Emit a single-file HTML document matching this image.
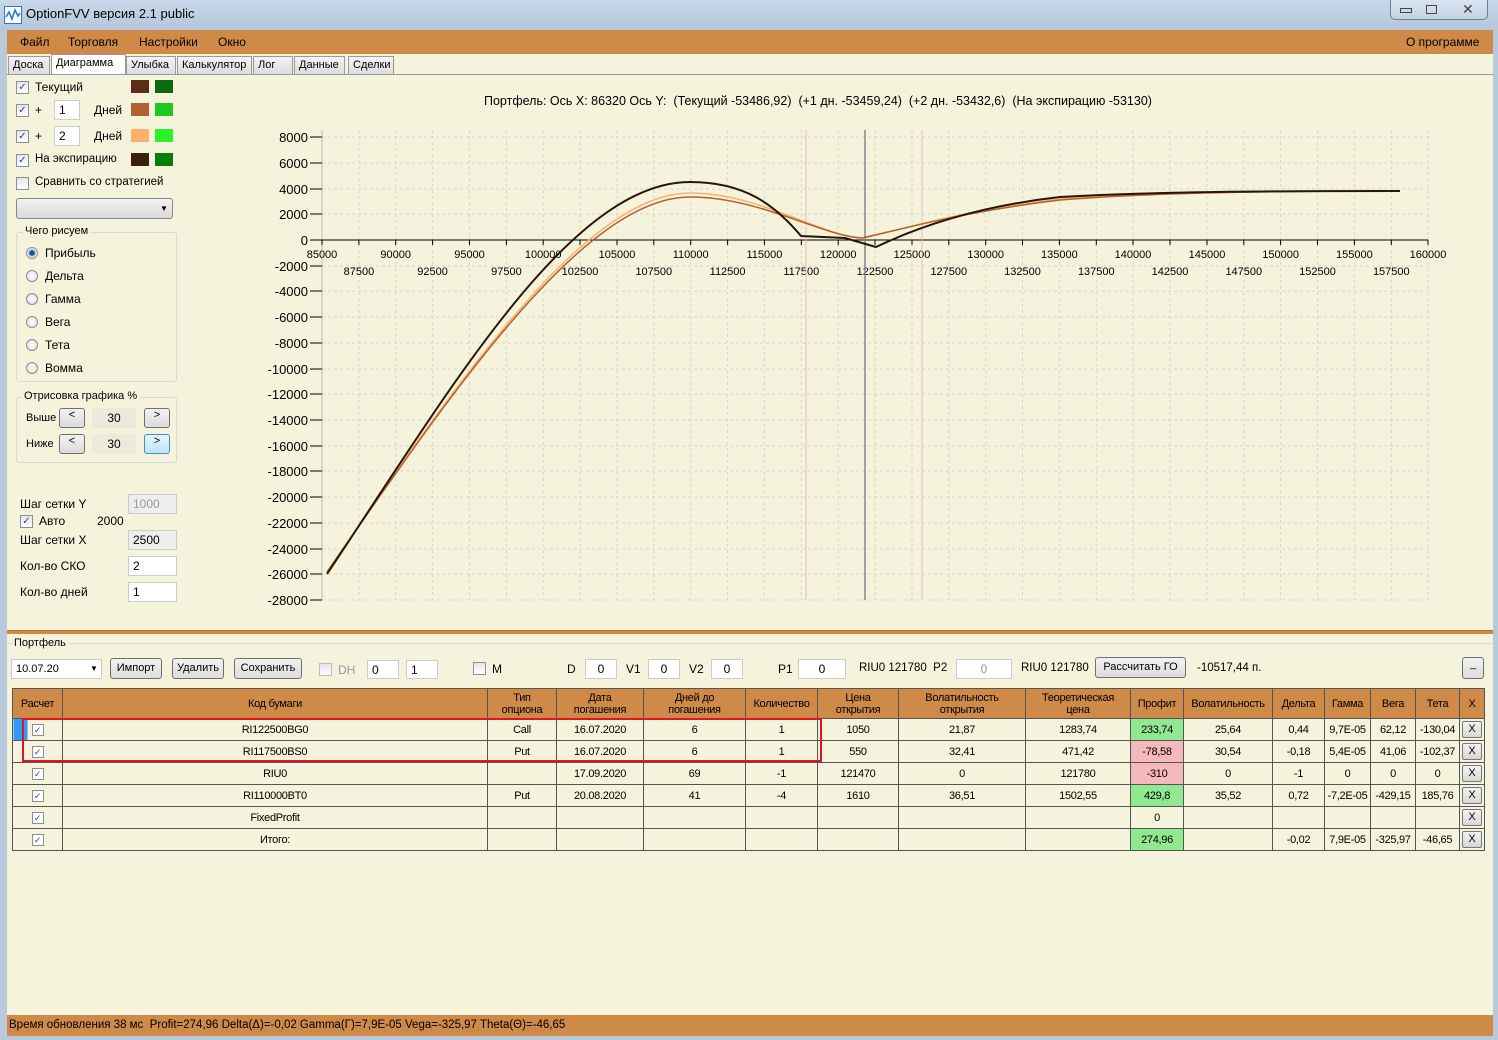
<!DOCTYPE html>
<html><head><meta charset="utf-8"><style>
*{margin:0;padding:0;box-sizing:border-box}
body{width:1498px;height:1040px;overflow:hidden;background:#b9c9dc;font-family:"Liberation Sans",sans-serif;font-size:12px;color:#000;position:relative}
.a{position:absolute}
.cb{position:absolute;width:13px;height:13px;border:1px solid #8a8f99;background:linear-gradient(#e4e6ea,#fff);font-size:10px;line-height:11px;text-align:center;color:#2a3f8a}
.tab{position:absolute;top:56px;height:18px;border:1px solid #999;border-bottom:none;background:linear-gradient(#f4f4f4,#dcdcdc);font-size:11px;line-height:17px;padding:0 4px}
.in{position:absolute;background:#fff;border:1px solid #ccc;height:20px;line-height:18px;padding-left:4px;font-size:12px}
.btn{position:absolute;border:1px solid #707070;border-radius:3px;background:linear-gradient(#f2f2f2,#dcdcdc);text-align:center;font-size:11px}
.sw{position:absolute;width:18px;height:13px}
.rad{position:absolute;width:12px;height:12px;border-radius:50%;border:1px solid #8d8d8d;background:radial-gradient(#fff,#dcdcdc)}
table{border-collapse:collapse;table-layout:fixed;width:1472px;position:absolute;left:12px;top:688px;font-size:11px;letter-spacing:-0.3px;white-space:nowrap}
td,th{border:1px solid #555;height:22px;text-align:center;font-weight:normal;padding:0;overflow:hidden}
th{background:#d08a48;height:30px;line-height:12px}
td{background:#f5f3dc}
.g{background:#90e890}.p{background:#f4b8bd}
.x{display:inline-block;width:20px;height:17px;border:1px solid #777;border-radius:2px;background:linear-gradient(#f2f2f2,#d8d8d8);line-height:15px;letter-spacing:0}
.c{display:inline-block;width:12px;height:12px;border:1px solid #8a8f99;background:#fff;font-size:9px;line-height:10px;color:#2a3f8a;vertical-align:middle}
</style></head><body>
<div class="a" style="left:0;top:0;width:1498px;height:30px;background:linear-gradient(#c9d8ea,#b5c7dd)"></div>
<svg class="a" style="left:4px;top:6px" width="18" height="18"><rect x=".5" y=".5" width="17" height="17" fill="#fff" stroke="#3a74c4"/><path d="M2 11 L5 6 L8 13 L11 4 L14 10 L16 7" stroke="#2a7ad0" stroke-width="1.6" fill="none"/></svg>
<div class="a" style="left:26px;top:6px;font-size:13px">OptionFVV версия 2.1 public</div>
<div class="a" style="left:1390px;top:0;width:98px;height:20px;border:1px solid #6f7f95;border-top:none;border-radius:0 0 5px 5px;background:linear-gradient(#dbe5f1,#c2d1e4)"></div>
<div class="a" style="left:1400px;top:8px;width:12px;height:5px;border:1px solid #444"></div>
<div class="a" style="left:1426px;top:5px;width:11px;height:9px;border:1px solid #444"></div>
<div class="a" style="left:1462px;top:1px;font-size:14px;color:#444">✕</div>
<div class="a" style="left:7px;top:30px;width:1486px;height:1006px;background:#f5f3dc"></div>
<div class="a" style="left:7px;top:30px;width:1486px;height:24px;background:#d08a48"></div>
<div class="a" style="left:20px;top:35px">Файл</div>
<div class="a" style="left:68px;top:35px">Торговля</div>
<div class="a" style="left:139px;top:35px">Настройки</div>
<div class="a" style="left:218px;top:35px">Окно</div>
<div class="a" style="left:1406px;top:35px">О программе</div>
<div class="tab" style="left:8px;width:42px">Доска</div>
<div class="tab" style="left:51px;top:54px;height:21px;background:#fff;width:75px">Диаграмма</div>
<div class="tab" style="left:126px;width:50px">Улыбка</div>
<div class="tab" style="left:177px;width:75px">Калькулятор</div>
<div class="tab" style="left:253px;width:40px">Лог</div>
<div class="tab" style="left:294px;width:51px">Данные</div>
<div class="tab" style="left:348px;width:46px">Сделки</div>
<div class="a" style="left:7px;top:74px;width:1486px;height:1px;background:#999"></div>
<div class="cb" style="left:16px;top:81px">✓</div><div class="a" style="left:35px;top:80px">Текущий</div>
<div class="sw" style="left:131px;top:80px;background:#5e2f18"></div><div class="sw" style="left:155px;top:80px;background:#0b6b0b"></div>
<div class="cb" style="left:16px;top:104px">✓</div><div class="a" style="left:35px;top:103px">+</div>
<div class="in" style="left:54px;top:100px;width:26px">1</div><div class="a" style="left:94px;top:103px">Дней</div>
<div class="sw" style="left:131px;top:103px;background:#b2622c"></div><div class="sw" style="left:155px;top:103px;background:#1fc91f"></div>
<div class="cb" style="left:16px;top:130px">✓</div><div class="a" style="left:35px;top:129px">+</div>
<div class="in" style="left:54px;top:126px;width:26px">2</div><div class="a" style="left:94px;top:129px">Дней</div>
<div class="sw" style="left:131px;top:129px;background:#fbb06c"></div><div class="sw" style="left:155px;top:129px;background:#2cf02c"></div>
<div class="cb" style="left:16px;top:154px">✓</div><div class="a" style="left:35px;top:153px;font-size:11.5px">На экспирацию</div>
<div class="sw" style="left:131px;top:153px;background:#3a1f0c"></div><div class="sw" style="left:155px;top:153px;background:#0a7c0a"></div>
<div class="cb" style="left:16px;top:177px"></div><div class="a" style="left:35px;top:176px;font-size:11.5px">Сравнить со стратегией</div>
<div class="a" style="left:16px;top:198px;width:157px;height:21px;border:1px solid #888;border-radius:3px;background:linear-gradient(#f2f2f2,#d9d9d9)"></div>
<div class="a" style="left:160px;top:204px;font-size:8px">▼</div>
<div class="a" style="left:16px;top:232px;width:161px;height:150px;border:1px solid #d8d8d8;border-radius:3px"></div>
<div class="a" style="left:23px;top:225px;background:#f5f3dc;padding:0 2px;font-size:11px">Чего рисуем</div>
<div class="rad" style="left:26px;top:247px;background:radial-gradient(#1e4f85 30%,#9cc0e4 45%,#fff 70%)"></div><div class="a" style="left:45px;top:246px">Прибыль</div>
<div class="rad" style="left:26px;top:270px"></div><div class="a" style="left:45px;top:269px">Дельта</div>
<div class="rad" style="left:26px;top:293px"></div><div class="a" style="left:45px;top:292px">Гамма</div>
<div class="rad" style="left:26px;top:316px"></div><div class="a" style="left:45px;top:315px">Вега</div>
<div class="rad" style="left:26px;top:339px"></div><div class="a" style="left:45px;top:338px">Тета</div>
<div class="rad" style="left:26px;top:362px"></div><div class="a" style="left:45px;top:361px">Вомма</div>
<div class="a" style="left:16px;top:397px;width:161px;height:66px;border:1px solid #d8d8d8;border-radius:3px"></div>
<div class="a" style="left:22px;top:390px;background:#f5f3dc;padding:0 2px;font-size:11px">Отрисовка графика %</div>
<div class="a" style="left:26px;top:412px;font-size:11px">Выше</div>
<div class="btn" style="left:59px;top:408px;width:26px;height:20px">&lt;</div>
<div class="a" style="left:92px;top:408px;width:44px;height:20px;background:#eceadc;text-align:center;line-height:20px">30</div>
<div class="btn" style="left:144px;top:408px;width:26px;height:20px">&gt;</div>
<div class="a" style="left:26px;top:438px;font-size:11px">Ниже</div>
<div class="btn" style="left:59px;top:434px;width:26px;height:20px">&lt;</div>
<div class="a" style="left:92px;top:434px;width:44px;height:20px;background:#eceadc;text-align:center;line-height:20px">30</div>
<div class="btn" style="left:144px;top:434px;width:26px;height:20px;border-color:#3c8fd0;background:linear-gradient(#e8f5fd,#bfe3f8)">&gt;</div>
<div class="a" style="left:20px;top:497px">Шаг сетки Y</div>
<div class="in" style="left:128px;top:494px;width:49px;background:#eee;color:#999">1000</div>
<div class="cb" style="left:20px;top:515px">✓</div><div class="a" style="left:39px;top:514px">Авто</div><div class="a" style="left:97px;top:514px">2000</div>
<div class="a" style="left:20px;top:533px">Шаг сетки X</div>
<div class="in" style="left:128px;top:530px;width:49px;background:#eee">2500</div>
<div class="a" style="left:20px;top:559px">Кол-во СКО</div>
<div class="in" style="left:128px;top:556px;width:49px">2</div>
<div class="a" style="left:20px;top:585px">Кол-во дней</div>
<div class="in" style="left:128px;top:582px;width:49px">1</div>
<div class="a" style="left:484px;top:94px;font-size:12.5px">Портфель: Ось X: 86320 Ось Y:&nbsp; (Текущий -53486,92)&nbsp; (+1 дн. -53459,24)&nbsp; (+2 дн. -53432,6)&nbsp; (На экспирацию -53130)</div>
<svg class="a" style="left:0;top:0" width="1498" height="630" font-family="Liberation Sans, sans-serif" font-size="12">
<g stroke="#d6d6cc" stroke-dasharray="3,3" stroke-width="1">
<path d="M322 137H1428M322 163H1428M322 189H1428M322 214H1428M322 266H1428M322 291H1428M322 317H1428M322 343H1428M322 369H1428M322 394H1428M322 420H1428M322 446H1428M322 471H1428M322 497H1428M322 523H1428M322 549H1428M322 574H1428M322 600H1428"/>
<path d="M358.9 130V600M395.7 130V600M432.6 130V600M469.5 130V600M506.4 130V600M543.2 130V600M580 130V600M617 130V600M653.8 130V600M690.7 130V600M727.6 130V600M764.4 130V600M801.3 130V600M838.2 130V600M875 130V600M912 130V600M948.8 130V600M985.7 130V600M1022.5 130V600M1059.4 130V600M1096.3 130V600M1133 130V600M1170 130V600M1207 130V600M1243.8 130V600M1280.6 130V600M1317.5 130V600M1354.4 130V600M1391.3 130V600M1428 130V600"/>
</g>
<path d="M322 130V600" stroke="#bbb"/>
<path d="M322 240H1428" stroke="#000"/>
<g stroke="#000"><path d="M310 137H322M310 163H322M310 189H322M310 214H322M310 240H322M310 266H322M310 291H322M310 317H322M310 343H322M310 369H322M310 394H322M310 420H322M310 446H322M310 471H322M310 497H322M310 523H322M310 549H322M310 574H322M310 600H322"/>
<path d="M322 240v5M358.9 240v5M395.7 240v5M432.6 240v5M469.5 240v5M506.4 240v5M543.2 240v5M580 240v5M617 240v5M653.8 240v5M690.7 240v5M727.6 240v5M764.4 240v5M801.3 240v5M838.2 240v5M875 240v5M912 240v5M948.8 240v5M985.7 240v5M1022.5 240v5M1059.4 240v5M1096.3 240v5M1133 240v5M1170 240v5M1207 240v5M1243.8 240v5M1280.6 240v5M1317.5 240v5M1354.4 240v5M1391.3 240v5M1428 240v5"/></g>
<g text-anchor="end" font-size="13"><text x="308" y="142">8000</text><text x="308" y="168">6000</text><text x="308" y="194">4000</text><text x="308" y="219">2000</text><text x="308" y="245">0</text><text x="308" y="271">-2000</text><text x="308" y="296">-4000</text><text x="308" y="322">-6000</text><text x="308" y="348">-8000</text><text x="308" y="374">-10000</text><text x="308" y="399">-12000</text><text x="308" y="425">-14000</text><text x="308" y="451">-16000</text><text x="308" y="476">-18000</text><text x="308" y="502">-20000</text><text x="308" y="528">-22000</text><text x="308" y="554">-24000</text><text x="308" y="579">-26000</text><text x="308" y="605">-28000</text></g>
<g text-anchor="middle" font-size="11"><text x="322" y="258">85000</text><text x="395.7" y="258">90000</text><text x="469.5" y="258">95000</text><text x="543.2" y="258">100000</text><text x="617" y="258">105000</text><text x="690.7" y="258">110000</text><text x="764.4" y="258">115000</text><text x="838.2" y="258">120000</text><text x="912" y="258">125000</text><text x="985.7" y="258">130000</text><text x="1059.4" y="258">135000</text><text x="1133" y="258">140000</text><text x="1207" y="258">145000</text><text x="1280.6" y="258">150000</text><text x="1354.4" y="258">155000</text><text x="1428" y="258">160000</text>
<text x="358.9" y="275">87500</text><text x="432.6" y="275">92500</text><text x="506.4" y="275">97500</text><text x="580" y="275">102500</text><text x="653.8" y="275">107500</text><text x="727.6" y="275">112500</text><text x="801.3" y="275">117500</text><text x="875" y="275">122500</text><text x="948.8" y="275">127500</text><text x="1022.5" y="275">132500</text><text x="1096.3" y="275">137500</text><text x="1170" y="275">142500</text><text x="1243.8" y="275">147500</text><text x="1317.5" y="275">152500</text><text x="1391.3" y="275">157500</text></g>
<path d="M806 130V600M922 130V600" stroke="#f2b7b7"/>
<path d="M865 130V600" stroke="#7f8a94" stroke-width="1.5"/>
<path d="M327 572 C455 385 585 193 690 193 C760 193 820 236 862 238 C900 230 960 211 1060 199 C1150 193 1250 191 1400 191" stroke="#fbb06c" stroke-width="1.5" fill="none"/>
<path d="M327 572 C455 387 585 197 690 197 C760 197 822 236 862 238 C900 230 960 212 1060 200 C1150 193 1250 191 1400 191" stroke="#b2622c" stroke-width="1.5" fill="none"/>
<path d="M327 574 C450 390 570 182 690 182 C745 182 775 205 801 236 L845 238 L876 247 C920 226 980 206 1060 197 C1150 192 1250 191 1400 191" stroke="#2a1608" stroke-width="2" fill="none"/>
</svg>
<div class="a" style="left:7px;top:630px;width:1486px;height:4px;background:#d08a48;border-top:1px solid #b77333"></div>
<div class="a" style="left:8px;top:643px;width:1484px;height:1px;background:#d8d8d8"></div>
<div class="a" style="left:14px;top:637px;background:#f5f3dc;padding-right:3px;font-size:11px">Портфель</div>
<div class="in" style="left:11px;top:659px;width:91px;font-size:11px">10.07.20</div><div class="a" style="left:90px;top:664px;font-size:8px">▼</div>
<div class="btn" style="left:110px;top:658px;width:52px;height:21px;line-height:19px">Импорт</div>
<div class="btn" style="left:172px;top:658px;width:52px;height:21px;line-height:19px">Удалить</div>
<div class="btn" style="left:234px;top:658px;width:68px;height:21px;line-height:19px">Сохранить</div>
<div class="cb" style="left:319px;top:663px;border-color:#bbb"></div><div class="a" style="left:338px;top:663px;color:#999">DH</div>
<div class="in" style="left:367px;top:660px;width:32px;height:19px">0</div>
<div class="in" style="left:406px;top:660px;width:32px;height:19px">1</div>
<div class="cb" style="left:473px;top:662px"></div><div class="a" style="left:492px;top:662px">M</div>
<div class="a" style="left:567px;top:662px">D</div><div class="in" style="left:585px;top:659px;width:32px;text-align:center;padding:0">0</div>
<div class="a" style="left:626px;top:662px">V1</div><div class="in" style="left:648px;top:659px;width:32px;text-align:center;padding:0">0</div>
<div class="a" style="left:689px;top:662px">V2</div><div class="in" style="left:711px;top:659px;width:32px;text-align:center;padding:0">0</div>
<div class="a" style="left:778px;top:662px">P1</div><div class="in" style="left:798px;top:659px;width:48px;text-align:center;padding:0">0</div>
<div class="a" style="left:859px;top:662px;font-size:11.5px">RIU0 121780&nbsp; P2</div><div class="in" style="left:956px;top:659px;width:56px;text-align:center;padding:0;color:#999">0</div>
<div class="a" style="left:1021px;top:662px;font-size:11.5px">RIU0 121780</div>
<div class="btn" style="left:1095px;top:657px;width:91px;height:21px;line-height:19px">Рассчитать ГО</div>
<div class="a" style="left:1197px;top:662px;font-size:11.5px">-10517,44 п.</div>
<div class="btn" style="left:1462px;top:657px;width:22px;height:22px">_</div>
<table>
<colgroup><col style="width:50px"><col style="width:425px"><col style="width:69px"><col style="width:87px"><col style="width:102px"><col style="width:72px"><col style="width:81px"><col style="width:127px"><col style="width:105px"><col style="width:53px"><col style="width:89px"><col style="width:52px"><col style="width:46px"><col style="width:45px"><col style="width:44px"><col style="width:25px"></colgroup>
<tr><th>Расчет</th><th>Код бумаги</th><th>Тип<br>опциона</th><th>Дата<br>погашения</th><th>Дней до<br>погашения</th><th>Количество</th><th>Цена<br>открытия</th><th>Волатильность<br>открытия</th><th>Теоретическая<br>цена</th><th>Профит</th><th>Волатильность</th><th>Дельта</th><th>Гамма</th><th>Вега</th><th>Тета</th><th>X</th></tr>
<tr><td style="background:linear-gradient(90deg,#3399ff 14px,#f5f3dc 14px)"><span class="c">✓</span></td><td>RI122500BG0</td><td>Call</td><td>16.07.2020</td><td>6</td><td>1</td><td>1050</td><td>21,87</td><td>1283,74</td><td class="g">233,74</td><td>25,64</td><td>0,44</td><td>9,7E-05</td><td>62,12</td><td>-130,04</td><td><span class="x">X</span></td></tr>
<tr><td><span class="c">✓</span></td><td>RI117500BS0</td><td>Put</td><td>16.07.2020</td><td>6</td><td>1</td><td>550</td><td>32,41</td><td>471,42</td><td class="p">-78,58</td><td>30,54</td><td>-0,18</td><td>5,4E-05</td><td>41,06</td><td>-102,37</td><td><span class="x">X</span></td></tr>
<tr><td><span class="c">✓</span></td><td>RIU0</td><td></td><td>17.09.2020</td><td>69</td><td>-1</td><td>121470</td><td>0</td><td>121780</td><td class="p">-310</td><td>0</td><td>-1</td><td>0</td><td>0</td><td>0</td><td><span class="x">X</span></td></tr>
<tr><td><span class="c">✓</span></td><td>RI110000BT0</td><td>Put</td><td>20.08.2020</td><td>41</td><td>-4</td><td>1610</td><td>36,51</td><td>1502,55</td><td class="g">429,8</td><td>35,52</td><td>0,72</td><td>-7,2E-05</td><td>-429,15</td><td>185,76</td><td><span class="x">X</span></td></tr>
<tr><td><span class="c">✓</span></td><td>FixedProfit</td><td></td><td></td><td></td><td></td><td></td><td></td><td></td><td>0</td><td></td><td></td><td></td><td></td><td></td><td><span class="x">X</span></td></tr>
<tr><td><span class="c">✓</span></td><td>Итого:</td><td></td><td></td><td></td><td></td><td></td><td></td><td></td><td class="g">274,96</td><td></td><td>-0,02</td><td>7,9E-05</td><td>-325,97</td><td>-46,65</td><td><span class="x">X</span></td></tr>
</table>
<div class="a" style="left:22px;top:718px;width:800px;height:44px;border:2px solid #e0141c"></div>
<div class="a" style="left:7px;top:1015px;width:1486px;height:21px;background:#d08a48"></div>
<div class="a" style="left:9px;top:1019px;font-size:11.5px">Время обновления 38 мс&nbsp; Profit=274,96 Delta(Δ)=-0,02 Gamma(Γ)=7,9E-05 Vega=-325,97 Theta(Θ)=-46,65</div>
</body></html>
